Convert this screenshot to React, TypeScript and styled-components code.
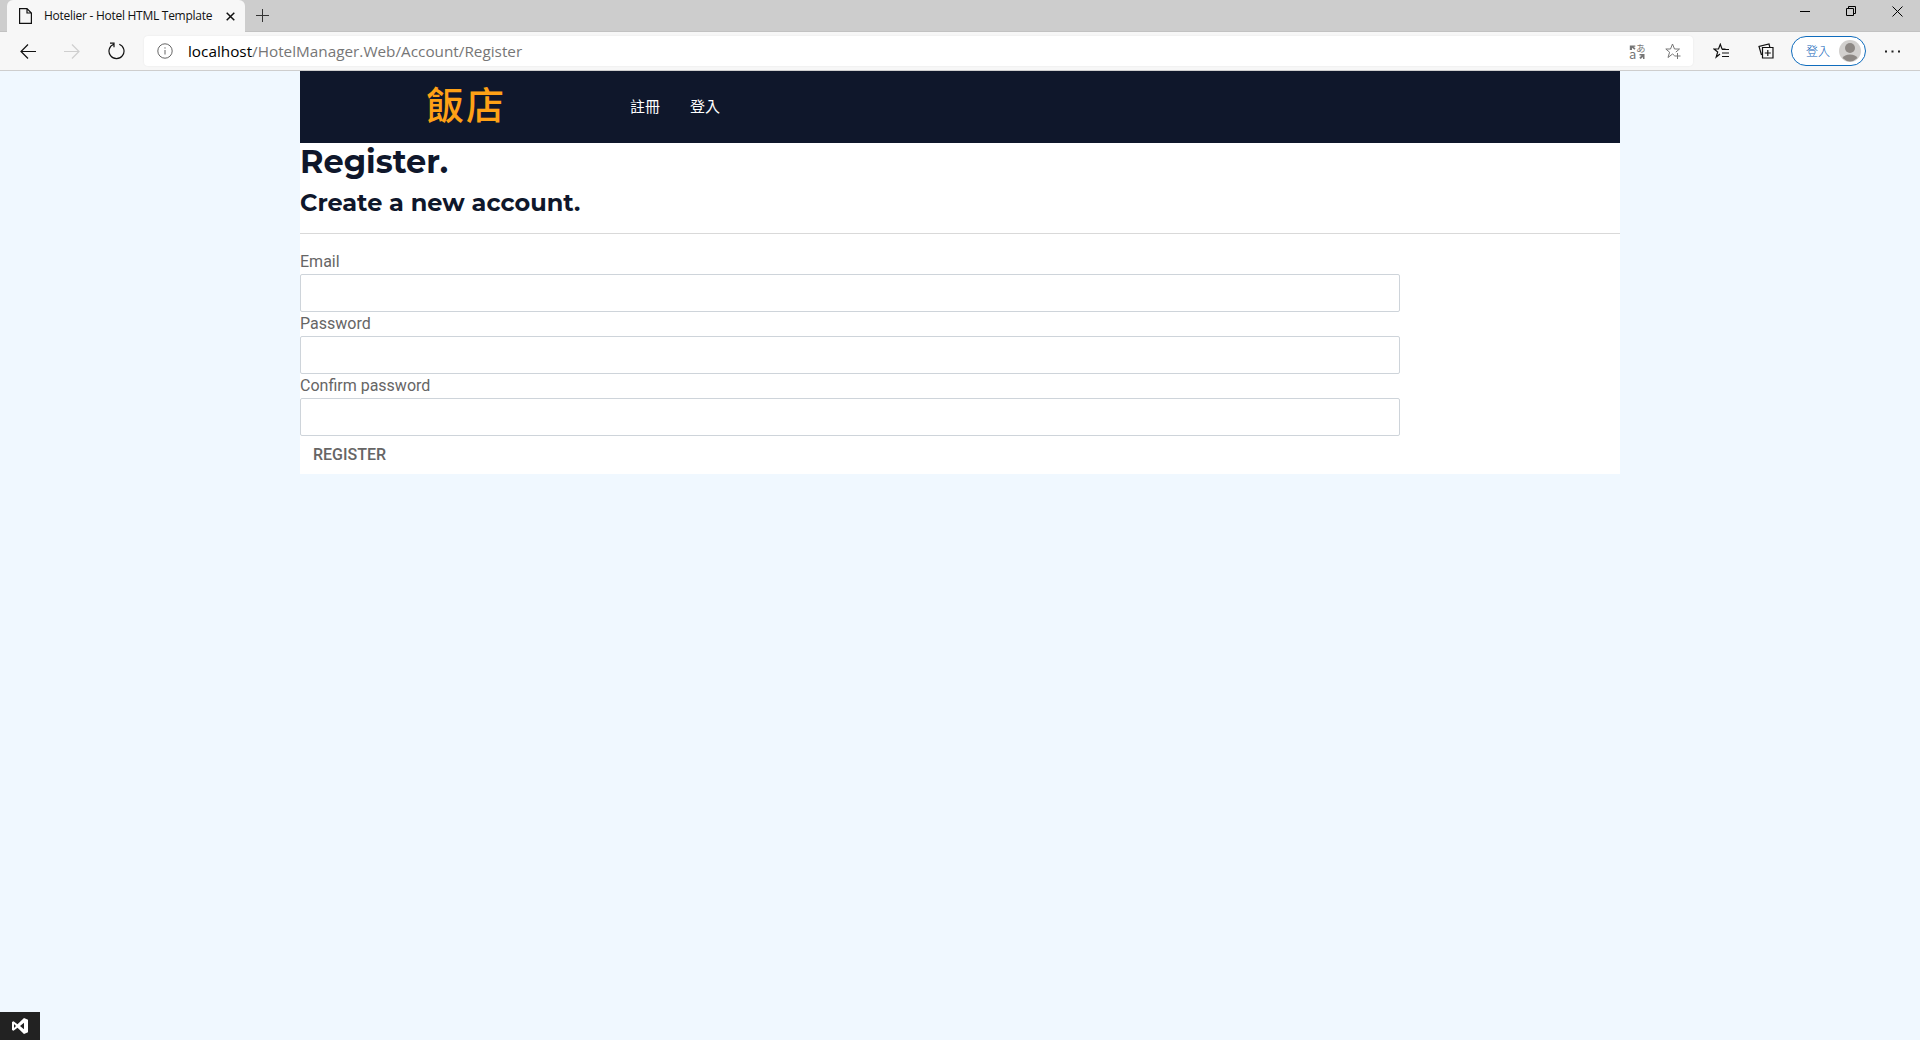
import React from 'react';
import styled, { createGlobalStyle } from 'styled-components';

const GlobalStyle = createGlobalStyle`
  * { box-sizing: border-box; }
  body { margin: 0; background: #f0f8ff; font-family: Roboto, "Noto Sans CJK TC", sans-serif; font-size: 16px; line-height: 1.5; color: #666565; }
`;

const ui = '"Open Sans", "Noto Sans", "Noto Sans CJK TC", sans-serif';

const Window = styled.div`
  display: flex;
  flex-direction: column;
  height: 1040px;
  overflow: hidden;
`;

const TabStrip = styled.div`
  display: flex;
  justify-content: space-between;
  height: 32px;
  padding-left: 7px;
  background: #cdcdcd;
  border-bottom: 1px solid #c2c2c2;
`;

const TabGroup = styled.div`
  display: flex;
`;

const Tab = styled.div`
  display: flex;
  align-items: center;
  width: 238px;
  height: 32px;
  padding: 0 10px 0 12px;
  border-radius: 6px 6px 0 0;
  background: #f7f7f7;
  font-family: ${ui};
  font-size: 12px;
  line-height: 32px;
  color: #111;
`;

const TabTitle = styled.span`
  flex: 1;
  margin-left: 12px;
  white-space: nowrap;
  letter-spacing: -0.27px;
`;

const NewTab = styled.div`
  padding: 8px 0 0 10px;
  svg { display: block; }
`;

const WindowButtons = styled.div`
  display: flex;
  padding-top: 3px;
  height: 20px;
`;

const WindowButton = styled.div`
  display: flex;
  align-items: center;
  justify-content: center;
  width: 46px;
  height: 16px;
`;

const Toolbar = styled.div`
  display: flex;
  align-items: center;
  height: 39px;
  background: #f7f7f7;
  border-bottom: 1px solid #cecece;
`;

const ToolButton = styled.div<{ $width: number }>`
  display: flex;
  flex-shrink: 0;
  align-items: center;
  justify-content: center;
  width: ${(p) => p.$width}px;
  height: 30px;
`;

const AddressBar = styled.div`
  display: flex;
  flex-shrink: 0;
  align-items: center;
  width: 1549px;
  height: 30px;
  padding: 0 11px 0 13px;
  border-radius: 4px;
  background: #fff;
  box-shadow: 0 0 2px rgba(0, 0, 0, 0.08);
`;

const Url = styled.div`
  flex: 1;
  margin-left: 15px;
  font-family: ${ui};
  font-size: 15.3px;
  color: #767676;
  white-space: nowrap;
`;

const Host = styled.span`
  color: #000;
`;

const AddressIcons = styled.div`
  display: flex;
  gap: 20px;
  svg { overflow: visible; }
`;

const SignIn = styled.div`
  display: flex;
  flex-shrink: 0;
  align-items: center;
  justify-content: space-between;
  width: 75px;
  height: 30px;
  margin-left: 8px;
  padding: 0 4px 0 14px;
  border: 1px solid #0f6cbd;
  border-radius: 15px;
  background: #fff;
  font-family: "Noto Sans CJK TC", sans-serif;
  font-size: 12px;
  font-weight: 300;
  line-height: 18px;
  color: #0f5fb8;
`;

const Viewport = styled.div`
  display: flex;
  flex-direction: column;
  flex: 1;
  justify-content: space-between;
`;

const Page = styled.main`
  width: 1320px;
  margin: 0 auto;
  background: #fff;
`;

const Nav = styled.nav`
  display: flex;
  align-items: center;
  height: 72px;
  background: #0f172b;
`;

const Brand = styled.div`
  width: 330px;
  padding: 0 0 8px 2px;
  text-align: center;
  font-family: "Noto Sans CJK TC", sans-serif;
  font-size: 38px;
  font-weight: 500;
  letter-spacing: 2px;
  line-height: 64px;
  color: #fea116;
`;

const NavLink = styled.a`
  margin-right: 30px;
  padding-bottom: 2px;
  font-family: "Noto Sans CJK TC", sans-serif;
  font-size: 15px;
  color: #fff;
`;

const Title = styled.h2`
  margin: 0 0 8px;
  font-family: Montserrat, Inter, sans-serif;
  font-size: 32px;
  font-weight: 700;
  line-height: 38.4px;
  color: #0f172b;
`;

const Subtitle = styled(Title).attrs({ as: 'h4' })`
  font-size: 24px;
  line-height: 28.8px;
  margin: 0;
`;

const Divider = styled.hr`
  height: 1px;
  margin: 14.8px 0 16px;
  border: 0;
  background: #d9d9d9;
`;

const Form = styled.form`
  display: flex;
  flex-direction: column;
  align-items: flex-start;
`;

const Label = styled.label`
  display: block;
  height: 24px;
`;

const Input = styled.input`
  display: block;
  width: 1100px;
  height: 38px;
  padding: 6px 12px;
  border: 1px solid #ced4da;
  border-radius: 2px;
  background: #fff;
`;

const RegisterButton = styled.button`
  height: 38px;
  padding: 6px 13px;
  border: 0;
  background: transparent;
  font: 500 16px/24px Roboto, sans-serif;
  color: #666565;
`;

const StudioBadge = styled.div`
  display: flex;
  align-items: center;
  justify-content: center;
  width: 40px;
  height: 28px;
  background: #222;
`;

const fields = ['Email', 'Password', 'Confirm password'];

export default function App() {
  return (
    <Window>
      <GlobalStyle />
      <TabStrip>
        <TabGroup>
          <Tab>
            <svg width="13" height="16" fill="none" stroke="#111" strokeWidth="1.2">
              <path d="M.6.6H8L12.400 5v10.400H.6zM8 .6V5h4.400" />
            </svg>
            <TabTitle>Hotelier - Hotel HTML Template</TabTitle>
            <svg width="9" height="9" stroke="#111" strokeWidth="1.5">
              <path d="M.7.7l7.600 7.600M8.300.7L.7 8.300" />
            </svg>
          </Tab>
          <NewTab>
            <svg width="15" height="15" stroke="#333">
              <path d="M7.500 1v13M1 7.500h13" />
            </svg>
          </NewTab>
        </TabGroup>
        <WindowButtons>
          <WindowButton>
            <svg width="10" height="11" stroke="#000"><path d="M0 5.500h10" /></svg>
          </WindowButton>
          <WindowButton>
            <svg width="10" height="10" fill="none" stroke="#000">
              <path d="M.5 2.500h7v7h-7zM2.500 2.500v-2h7v7h-2" />
            </svg>
          </WindowButton>
          <WindowButton>
            <svg width="11" height="11" stroke="#000"><path d="M.5.5l10 10M10.500.5l-10 10" /></svg>
          </WindowButton>
        </WindowButtons>
      </TabStrip>
      <Toolbar>
        <ToolButton $width={56}>
          <svg width="16" height="15" fill="none" stroke="#111" strokeWidth="1.2">
            <path d="M16 7.500H1M8 .5l-7 7 7 7" />
          </svg>
        </ToolButton>
        <ToolButton $width={32}>
          <svg width="16" height="15" fill="none" stroke="#cfcfcf" strokeWidth="1.2">
            <path d="M0 7.500h15M8 .5l7 7-7 7" />
          </svg>
        </ToolButton>
        <ToolButton $width={56}>
          <svg width="17" height="18" fill="none" stroke="#111" strokeWidth="1.2">
            <path d="M11.300 2.200a7.500 7.500 0 1 1-5.600 0M2 1.200h4v4" />
          </svg>
        </ToolButton>
        <AddressBar>
          <svg width="16" height="16" fill="none" stroke="#666">
            <circle cx="8" cy="8" r="7.200" />
            <path d="M8 7v4.500M8 4.300v1.300" />
          </svg>
          <Url><Host>localhost</Host>/HotelManager.Web/Account/Register</Url>
          <AddressIcons>
            <svg width="16" height="17" fill="#767676" fontFamily="Noto Sans CJK JP, sans-serif">
              <path d="M.8 2.500h5.500v1.300H4.600L6.500 5.500 5.500 6.800 3 4.800V7H.8zM10.500 11h5v5H14v-2l-2.300 2.100-1.400-1.300 2.200-2.300h-2z" />
              <text x="7" y="8.500" fontSize="9.500">あ</text>
              <text x="0" y="16" fontSize="13">a</text>
            </svg>
            <svg width="17" height="17" fill="none" stroke="#767676">
              <path d="M9.500 12.500L7.500 11 3 14.500l1.600-5.300L.8 6h4.700l2-5 2 5h5l-3.700 3.100M12.500 10v6M9.500 13h6" />
            </svg>
          </AddressIcons>
        </AddressBar>
        <ToolButton $width={56}>
          <svg width="17" height="17" fill="none" stroke="#111" strokeWidth="1.200">
            <path d="M7 11l-3.800 3L4.700 9 1 6h4.500L7.300 1.300 9 6h3.500M9 6.500h7M9 10h7M9 13.500h7" />
          </svg>
        </ToolButton>
        <ToolButton $width={34}>
          <svg width="16" height="16" fill="none" stroke="#111" strokeWidth="1.200">
            <path d="M4.500 4.500h10.500v10.500H4.500zM9.800 7v6M6.800 10h6M3.500 12L1 3.500 11 1l.8 3" />
          </svg>
        </ToolButton>
        <SignIn>
          登入
          <svg width="22" height="22">
            <circle cx="11" cy="11" r="11" fill="#d2d0ce" />
            <circle cx="11" cy="8" r="5" fill="#8d8884" />
            <path d="M3.500 18a8 5.500 0 0 1 15 0q-7.500 7-15 0" fill="#8d8884" />
          </svg>
        </SignIn>
        <ToolButton $width={52}>
          <svg width="15" height="3" fill="#222">
            <path d="M0 .5h2v2H0zM6.500 .5h2v2h-2zM13 .5h2v2h-2z" />
          </svg>
        </ToolButton>
      </Toolbar>
      <Viewport>
        <Page>
          <Nav>
            <Brand>飯店</Brand>
            <NavLink>註冊</NavLink>
            <NavLink>登入</NavLink>
          </Nav>
          <Title>Register.</Title>
          <Subtitle>Create a new account.</Subtitle>
          <Divider />
          <Form>
            {fields.map((name) => (
              <React.Fragment key={name}>
                <Label htmlFor={name}>{name}</Label>
                <Input id={name} />
              </React.Fragment>
            ))}
            <RegisterButton type="button">REGISTER</RegisterButton>
          </Form>
        </Page>
        <StudioBadge>
          <svg width="16" height="16" fill="#fff" fillRule="evenodd">
            <path d="M0 4l1.500-.8L5.500 6.300 12 0l4 1.800v12.400L12 16 5.500 9.700l-4 3.100L0 12zM2 6v4l2-2zM12 4.800L8 8l4 3.200z" />
          </svg>
        </StudioBadge>
      </Viewport>
    </Window>
  );
}
